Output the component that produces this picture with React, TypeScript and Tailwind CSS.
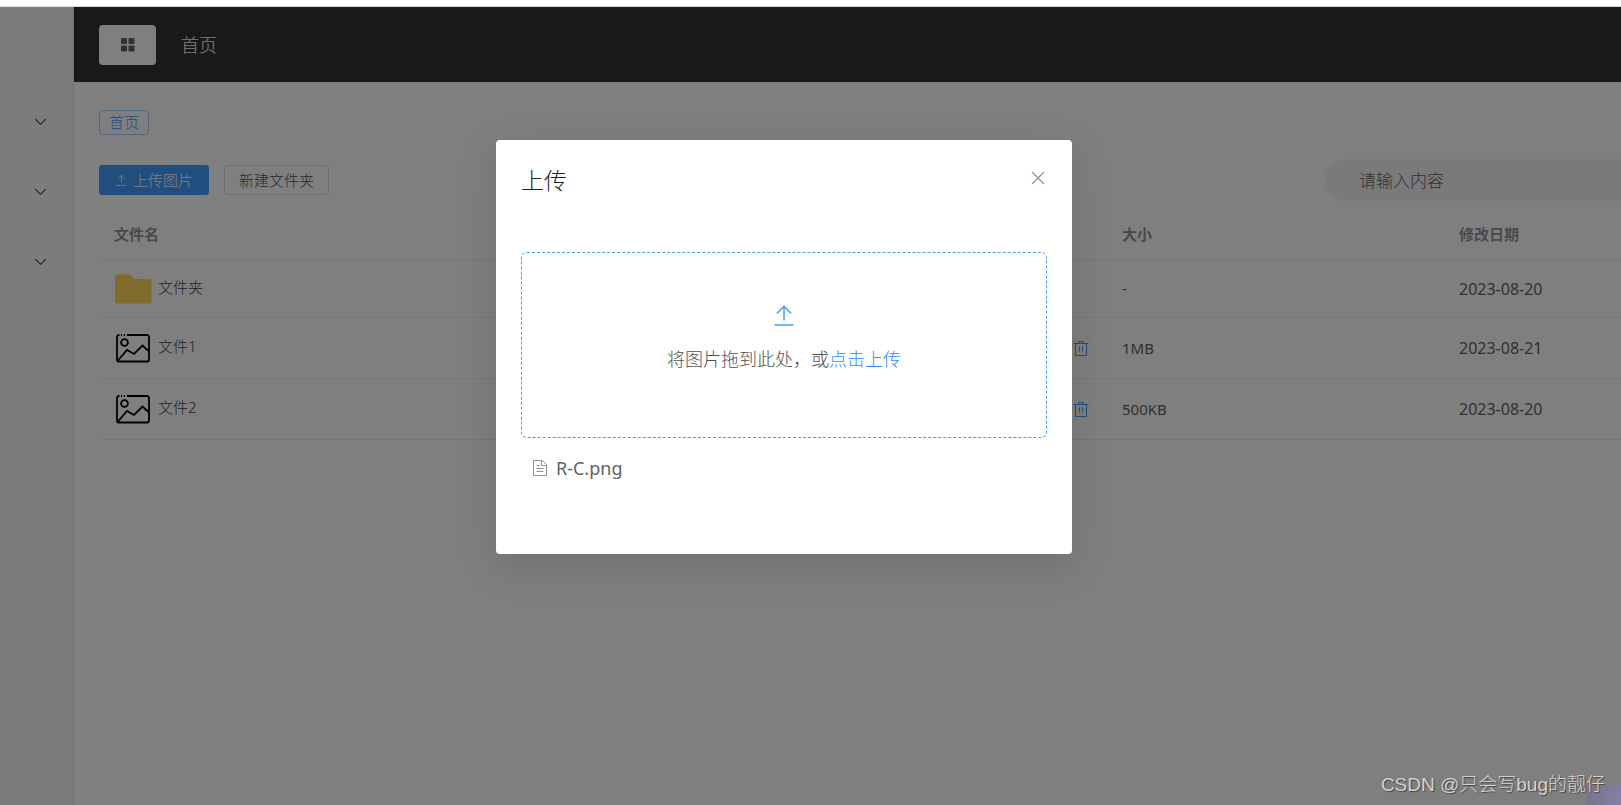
import { useState } from 'react';
import type { ReactNode } from 'react';

type FileRow = {
  name: string;
  type: 'folder' | 'image';
  size: string;
  date: string;
};

const files: FileRow[] = [
  { name: '文件夹', type: 'folder', size: '-', date: '2023-08-20' },
  { name: '文件1', type: 'image', size: '1MB', date: '2023-08-21' },
  { name: '文件2', type: 'image', size: '500KB', date: '2023-08-20' },
];

const menus = ['菜单一', '菜单二', '菜单三'];

function Icon({ className, children }: { className: string; children: ReactNode }) {
  return (
    <svg viewBox="0 0 16 16" fill="none" stroke="currentColor" className={className} aria-hidden="true">
      {children}
    </svg>
  );
}

function UploadIcon({ className }: { className: string }) {
  return (
    <Icon className={className}>
      <path d="M8 11V1.700M3.200 6.300 8 1.500l4.800 4.800M1.700 14h12.600" />
    </Icon>
  );
}

function TrashIcon() {
  return (
    <Icon className="h-4 w-4">
      <path d="M0.500 3.500h15M5.500 3.500v-2h5v2M2.500 3.500v12h11v-12M6.500 6.500v5M9.500 6.500v5" />
    </Icon>
  );
}

function FolderIcon() {
  return (
    <svg viewBox="0 0 38 38" className="h-[38px] w-[38px]" aria-hidden="true">
      <path
        d="M1 6.500a2 2 0 0 1 2-2h12a3 3 0 0 1 2 1l3 3.500h15.500a2 2 0 0 1 2 2V31.500a2 2 0 0 1-2 2H3a2 2 0 0 1-2-2z"
        fill="#ffd658"
      />
    </svg>
  );
}

function ImageIcon() {
  return (
    <svg viewBox="0 0 38 38" fill="none" stroke="#000" strokeWidth="1.800" className="h-[38px] w-[38px]" aria-hidden="true">
      <path d="M5.500 6H5a2 2 0 0 0-2 2v22.500a2 2 0 0 0 2 2h28a2 2 0 0 0 2-2V8a2 2 0 0 0-2-2H13M7 6h1M9.800 6h1.200" />
      <circle cx="10.500" cy="13.500" r="3.400" />
      <path d="M4 31.500 13 21l7 4 8.500-8.500 6.500 6" />
    </svg>
  );
}

function Sidebar() {
  return (
    <aside className="w-[74px] shrink-0 border-r border-[#e0e0e0] bg-[#f8f8f8] pt-[79px]">
      {menus.map((menu) => (
        <button key={menu} aria-label={menu} className="flex h-[70px] w-full items-center justify-end pr-[26px] text-[#333333]">
          <Icon className="h-[13px] w-[13px]">
            <path d="M1.500 5 8 11.500 14.500 5" strokeWidth="1.300" />
          </Icon>
        </button>
      ))}
    </aside>
  );
}

function Header() {
  return (
    <header className="flex h-[75px] items-center gap-[25px] bg-[#333333] px-[25px]">
      <button aria-label="菜单" className="flex h-10 w-[57px] items-center justify-center rounded bg-white text-[#606266]">
        <svg viewBox="0 0 14 14" fill="currentColor" className="h-[14px] w-[14px]" aria-hidden="true">
          <rect x="0" y="0" width="6" height="6" rx="0.800" />
          <rect x="7.500" y="0" width="6" height="6" rx="0.800" />
          <rect x="0" y="7.500" width="6" height="6" rx="0.800" />
          <rect x="7.500" y="7.500" width="6" height="6" rx="0.800" />
        </svg>
      </button>
      <h1 className="text-lg leading-6 font-light text-white">首页</h1>
    </header>
  );
}

function FileTable() {
  return (
    <table className="mt-2 w-full table-fixed text-left">
      <colgroup>
        <col />
        <col className="w-[337px]" />
        <col className="w-[177px]" />
      </colgroup>
      <thead>
        <tr className="border-b border-[#ebeef5] text-[15px] leading-6 text-[#909399]">
          <th className="px-[15px] py-[13px] font-bold">文件名</th>
          <th className="px-[15px] py-[13px] font-bold">大小</th>
          <th className="px-[15px] py-[13px] font-bold">修改日期</th>
        </tr>
      </thead>
      <tbody>
        {files.map((file) => (
          <tr key={file.name} className="border-b border-[#ebeef5] text-base text-[#606266]">
            <td className={file.type === 'folder' ? 'h-[58px] px-[15px]' : 'h-[61px] px-[15px]'}>
              <div className="flex items-center gap-[6px]">
                {file.type === 'folder' ? <FolderIcon /> : <ImageIcon />}
                <a href="#" className="flex-1 pb-[3px] text-[15px] font-light text-[#34445a]">
                  {file.name}
                </a>
                {file.type === 'image' && (
                  <button aria-label="删除" className="pr-[3px] text-[#409eff]">
                    <TrashIcon />
                  </button>
                )}
              </div>
            </td>
            <td className="px-[15px] text-[15px]">{file.size}</td>
            <td className="px-[15px]">{file.date}</td>
          </tr>
        ))}
      </tbody>
    </table>
  );
}

function UploadDialog({ onClose }: { onClose: () => void }) {
  return (
    <div className="absolute inset-0 flex items-start justify-center bg-black/50 pt-[133px] pr-[53px]">
      <section
        role="dialog"
        aria-labelledby="upload-title"
        className="w-full max-w-[576px] rounded-sm bg-white px-[25px] pt-6 pb-[72px] shadow-[0_12px_40px_rgba(0,0,0,0.13)]"
      >
        <div className="flex items-start justify-between">
          <h2 id="upload-title" className="text-[23px] leading-8 font-light text-[#202123]">
            上传
          </h2>
          <button aria-label="关闭" onClick={onClose} className="px-px pt-[6px] text-[#909399]">
            <Icon className="h-4 w-4">
              <path d="m2 2 12 12M14 2 2 14" strokeWidth="1.200" />
            </Icon>
          </button>
        </div>

        <label className="mt-14 flex h-[186px] w-full cursor-pointer flex-col items-center rounded-md border border-dashed border-[#409eff] pt-[51px] text-lg leading-6 font-light text-[#505256]">
          <input type="file" className="sr-only" />
          <UploadIcon className="mb-[19px] h-6 w-6 text-[#409eff]" />
          <span>
            将图片拖到此处，或<em className="text-[#2b90ff] not-italic">点击上传</em>
          </span>
        </label>

        <ul className="mt-4 px-[11px]">
          <li className="flex items-center gap-2 text-lg leading-7 text-[#606266]">
            <Icon className="h-4 w-4 text-[#909399]">
              <path d="M1.500 0.500h9l4 4v11h-13zM9.500 0.500v5h5M4.500 5.500h3M4.500 8.500h7M4.500 11.500h7" />
            </Icon>
            R-C.png
          </li>
        </ul>
      </section>
    </div>
  );
}

export default function App() {
  const [open, setOpen] = useState(true);

  return (
    <div className="flex h-screen flex-col overflow-hidden bg-white font-['Noto_Sans','Noto_Sans_CJK_SC',sans-serif]">
      <div className="h-[7px] shrink-0 border-b border-[#d8dadc]" />
      <div className="relative flex min-h-0 flex-1">
        <Sidebar />
        <div className="min-w-0 flex-1">
          <Header />
          <main className="pl-[25px]">
            <div className="flex pt-7">
              <a
                href="#"
                className="flex h-[25px] items-center rounded border border-[#9fceff] px-[9px] text-[15px] font-light text-[#409eff]"
              >
                首页
              </a>
            </div>
            <div className="mt-6 flex items-center gap-[15px]">
              <button className="flex h-[30px] items-center gap-[5px] rounded-[3px] bg-[#409eff] px-4 text-[15px] font-light text-white">
                <UploadIcon className="h-[13px] w-[13px]" />
                上传图片
              </button>
              <button className="h-[30px] rounded-[3px] border border-[#dcdfe6] px-[14px] text-[15px] leading-7 font-light text-[#505256]">
                新建文件夹
              </button>
              <input
                type="text"
                aria-label="搜索"
                placeholder="请输入内容"
                className="ml-auto h-[42px] w-[296px] rounded-l-full bg-[#f4f4f4] pl-[34px] text-[17px] font-light placeholder:text-[#606060]"
              />
            </div>
            <FileTable />
          </main>
        </div>
        {open && <UploadDialog onClose={() => setOpen(false)} />}
        <div className="absolute right-0 bottom-0 h-5 w-[35px] bg-linear-to-r from-[#77758a] to-[#837fa6]" />
        <p className="absolute right-4 bottom-[6px] font-['Liberation_Sans','Noto_Sans_CJK_SC',sans-serif] text-[19px] leading-7 font-light text-[#d2d2d2] [text-shadow:1px_1px_1px_#444]">
          CSDN @只会写bug的靓仔
        </p>
      </div>
    </div>
  );
}
